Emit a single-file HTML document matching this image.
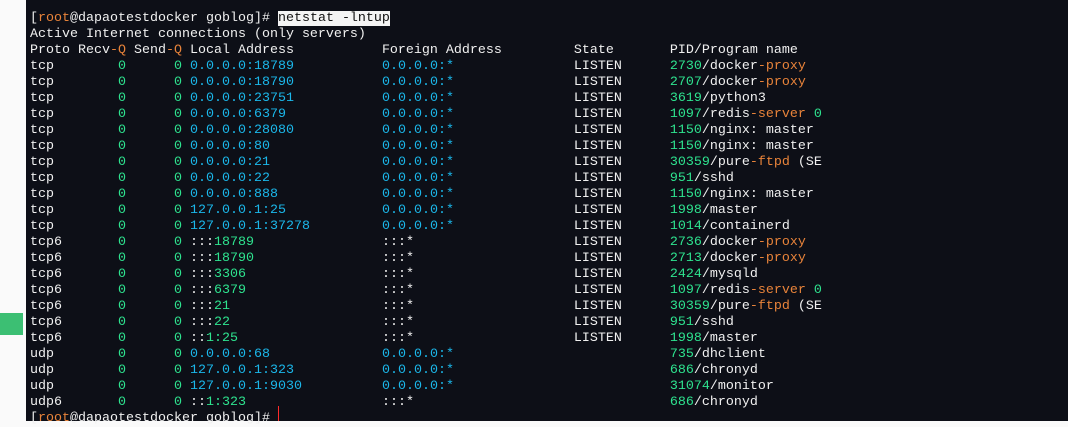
<!DOCTYPE html>
<html><head><meta charset="utf-8"><style>
html,body{margin:0;padding:0;width:1068px;height:421px;overflow:hidden;background:#fafafa;}
#t{position:absolute;left:26px;top:0;width:1042px;height:421px;background:#0d0f17;}
#m{position:absolute;left:0;top:313px;width:23px;height:22px;background:#3cbf73;}
#cur{position:absolute;left:278px;top:406px;width:1px;height:15px;background:#ff2a2a;}
pre{position:absolute;left:30px;top:11px;margin:0;font-family:"Liberation Mono",monospace;font-size:13.33px;line-height:16px;color:#f0f0f0;white-space:pre;}
.g{color:#2ee38f}.b{color:#1bb7ea}.o{color:#e8833a}.h{background:#f4f4f4;color:#111}
</style></head><body>
<div id="t"></div><div id="m"></div>
<pre>[<span class="o">root</span>@dapaotestdocker goblog]# <span class="h">netstat -lntup</span>
Active Internet connections (only servers)
Proto Recv<span class="o">-Q</span> Send<span class="o">-Q</span> Local Address           Foreign Address         State       PID/Program name
tcp        <span class="g">0</span>      <span class="g">0</span> <span class="b">0.0.0.0:18789</span>           <span class="b">0.0.0.0:*</span>               LISTEN      <span class="g">2730</span>/docker<span class="o">-proxy</span>
tcp        <span class="g">0</span>      <span class="g">0</span> <span class="b">0.0.0.0:18790</span>           <span class="b">0.0.0.0:*</span>               LISTEN      <span class="g">2707</span>/docker<span class="o">-proxy</span>
tcp        <span class="g">0</span>      <span class="g">0</span> <span class="b">0.0.0.0:23751</span>           <span class="b">0.0.0.0:*</span>               LISTEN      <span class="g">3619</span>/python3
tcp        <span class="g">0</span>      <span class="g">0</span> <span class="b">0.0.0.0:6379</span>            <span class="b">0.0.0.0:*</span>               LISTEN      <span class="g">1097</span>/redis<span class="o">-server</span> <span class="g">0</span>
tcp        <span class="g">0</span>      <span class="g">0</span> <span class="b">0.0.0.0:28080</span>           <span class="b">0.0.0.0:*</span>               LISTEN      <span class="g">1150</span>/nginx: master
tcp        <span class="g">0</span>      <span class="g">0</span> <span class="b">0.0.0.0:80</span>              <span class="b">0.0.0.0:*</span>               LISTEN      <span class="g">1150</span>/nginx: master
tcp        <span class="g">0</span>      <span class="g">0</span> <span class="b">0.0.0.0:21</span>              <span class="b">0.0.0.0:*</span>               LISTEN      <span class="g">30359</span>/pure<span class="o">-ftpd</span> (SE
tcp        <span class="g">0</span>      <span class="g">0</span> <span class="b">0.0.0.0:22</span>              <span class="b">0.0.0.0:*</span>               LISTEN      <span class="g">951</span>/sshd
tcp        <span class="g">0</span>      <span class="g">0</span> <span class="b">0.0.0.0:888</span>             <span class="b">0.0.0.0:*</span>               LISTEN      <span class="g">1150</span>/nginx: master
tcp        <span class="g">0</span>      <span class="g">0</span> <span class="b">127.0.0.1:25</span>            <span class="b">0.0.0.0:*</span>               LISTEN      <span class="g">1998</span>/master
tcp        <span class="g">0</span>      <span class="g">0</span> <span class="b">127.0.0.1:37278</span>         <span class="b">0.0.0.0:*</span>               LISTEN      <span class="g">1014</span>/containerd
tcp6       <span class="g">0</span>      <span class="g">0</span> :::<span class="g">18789</span>                :::*                    LISTEN      <span class="g">2736</span>/docker<span class="o">-proxy</span>
tcp6       <span class="g">0</span>      <span class="g">0</span> :::<span class="g">18790</span>                :::*                    LISTEN      <span class="g">2713</span>/docker<span class="o">-proxy</span>
tcp6       <span class="g">0</span>      <span class="g">0</span> :::<span class="g">3306</span>                 :::*                    LISTEN      <span class="g">2424</span>/mysqld
tcp6       <span class="g">0</span>      <span class="g">0</span> :::<span class="g">6379</span>                 :::*                    LISTEN      <span class="g">1097</span>/redis<span class="o">-server</span> <span class="g">0</span>
tcp6       <span class="g">0</span>      <span class="g">0</span> :::<span class="g">21</span>                   :::*                    LISTEN      <span class="g">30359</span>/pure<span class="o">-ftpd</span> (SE
tcp6       <span class="g">0</span>      <span class="g">0</span> :::<span class="g">22</span>                   :::*                    LISTEN      <span class="g">951</span>/sshd
tcp6       <span class="g">0</span>      <span class="g">0</span> ::<span class="g">1:25</span>                  :::*                    LISTEN      <span class="g">1998</span>/master
udp        <span class="g">0</span>      <span class="g">0</span> <span class="b">0.0.0.0:68</span>              <span class="b">0.0.0.0:*</span>                           <span class="g">735</span>/dhclient
udp        <span class="g">0</span>      <span class="g">0</span> <span class="b">127.0.0.1:323</span>           <span class="b">0.0.0.0:*</span>                           <span class="g">686</span>/chronyd
udp        <span class="g">0</span>      <span class="g">0</span> <span class="b">127.0.0.1:9030</span>          <span class="b">0.0.0.0:*</span>                           <span class="g">31074</span>/monitor
udp6       <span class="g">0</span>      <span class="g">0</span> ::<span class="g">1:323</span>                 :::*                                <span class="g">686</span>/chronyd
[<span class="o">root</span>@dapaotestdocker goblog]# </pre>
<div id="cur"></div>
</body></html>
